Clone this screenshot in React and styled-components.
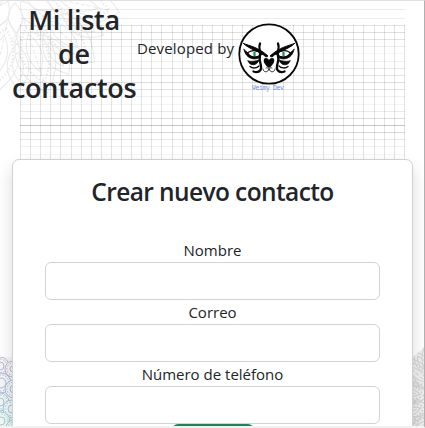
import React from "react";
import styled, { createGlobalStyle } from "styled-components";

const GlobalStyle = createGlobalStyle`
  * { box-sizing: border-box; }
  html, body { margin: 0; height: 428px; overflow: hidden; }
  body {
    background: #fff;
    color: #212529;
    font-family: "Open Sans", "Noto Sans", sans-serif;
    font-size: 15px;
    line-height: 24px;
  }
`;

const Page = styled.div`
  position: relative;
  width: 425px;
  height: 428px;
  overflow: hidden;
  border-top: 1px solid #e0e0e0;
  border-right: 1px solid #b0b0b0;
  border-bottom: 2px solid #f2f2f3;
`;

const Backdrop = styled.svg`
  position: absolute;
  left: 0;
  top: -1px;
`;

const Header = styled.header`
  position: relative;
  display: flex;
  align-items: flex-start;
  height: 158px;
  padding-left: 12px;
`;

const Title = styled.h1`
  width: 124px;
  margin: 2px 0 0;
  text-align: center;
  font-size: 27px;
  line-height: 34px;
  font-weight: 600;
  letter-spacing: -0.3px;
  white-space: nowrap;
`;

const Credit = styled.span`
  margin: 35px 0 0 1px;
  width: 101px;
  white-space: nowrap;
  letter-spacing: 0.15px;
`;

const Logo = styled.svg`
  margin-top: 19px;
`;

const Card = styled.main`
  position: relative;
  width: 401px;
  height: 400px;
  margin-left: 12px;
  padding: 15px 32px;
  border: 1px solid #ced0d2;
  border-radius: 7px;
  background: #fff;
  box-shadow: 0 8px 16px rgba(0, 0, 0, 0.15);
`;

const CardTitle = styled.h2`
  margin: 0 0 29px;
  text-align: center;
  font-size: 24.5px;
  line-height: 34px;
  font-weight: 600;
  letter-spacing: -0.6px;
  white-space: nowrap;
`;

const Form = styled.form`
  display: flex;
  flex-direction: column;
`;

const Field = styled.label`
  display: flex;
  flex-direction: column;
  height: 62px;
  text-align: center;
`;

const FieldName = styled.span`
  height: 24px;
`;

const Input = styled.input`
  width: 335px;
  height: 38px;
  border: 1px solid #ced4da;
  border-radius: 6px;
  background: #fff;
`;

const Submit = styled.button`
  align-self: center;
  width: 82px;
  height: 38px;
  border: 0;
  border-radius: 6px;
  background: #198754;
`;

const columns = Array.from({ length: 39 }, (_, i) => Math.round(20 + i * 10.1) + 0.5);
const rows = [
  [9, 0.07], [18, 0.07], [25, 0.11], [32, 0.13], [39, 0.11], [46, 0.07], [53, 0.03],
  [61, 0.05], [68, 0.09], [75, 0.11], [82, 0.13], [89, 0.11], [96, 0.06], [104, 0.04],
  [111, 0.08], [118, 0.13], [125, 0.22], [132, 0.15], [139, 0.09], [146, 0.05], [154, 0.03],
];

const leaf = (a, b, w) => {
  const m = a + (b - a) * 0.5;
  return `M${a} 0Q${m} ${-w} ${b} 0Q${m} ${w} ${a} 0Z`;
};

const Mandala = ({ x, y, radius: r, color, opacity }) => (
  <g transform={`translate(${x} ${y})`} fill="none" stroke={color} opacity={opacity}>
    {Array.from({ length: 12 }, (_, i) => (
      <g key={i} transform={`rotate(${i * 30 + 12})`}>
        <path d={leaf(r * 0.28, r, r * 0.36)} />
        <path d={leaf(r * 0.36, r * 0.9, r * 0.24)} strokeWidth="2.2" strokeDasharray="1.5 2" />
        <path d={leaf(r * 0.43, r * 0.8, r * 0.13)} />
        <path d={`M${r * 0.3} 0H${r * 0.9}`} strokeDasharray="4 2" />
        <g transform="rotate(15)">
          <path d={leaf(r * 0.5, r * 0.93, r * 0.2)} />
          <path d={leaf(r * 0.58, r * 0.84, r * 0.1)} />
          <path d={leaf(r * 0.12, r * 0.4, r * 0.13)} />
          <circle cx={r * 0.46} r={r * 0.035} />
        </g>
      </g>
    ))}
  </g>
);

const scallops = [
  [0, 366, 9, "#bdb8d0"], [13, 369, 8, "#bdb8d0"], [1, 383, 10, "#abb8d8"], [14, 389, 9, "#a6bcda"],
  [0, 402, 9, "#a0c4da"], [12, 409, 9, "#9bcbd9"], [1, 421, 9, "#96d6d2"], [14, 428, 8, "#96d6d2"],
];

const Scallop = ({ x, y, r, color }) => (
  <g transform={`translate(${x} ${y})`} stroke={color}>
    <circle r={r} />
    <circle r={r - 2} strokeDasharray="1.5 1.5" />
    <circle r={r - 5} />
  </g>
);

const Face = () => (
  <g fill="none" stroke="#080808" strokeLinecap="round">
    <path d="M5.5 23.5C12 26 20 27 30 36L28 37C22 31 12 30 5.5 23.5Z" fill="#080808" strokeWidth="1" />
    <path d="M9 34C12 29.5 19 29.5 24 34C19 38 13 38 9 34Z" strokeWidth="1.1" />
    <path d="M6 29.5L10 33C12 37 18 38 23 36C19 41 8 40 6 29.5Z" fill="#080808" strokeWidth="0.8" />
    <path d="M22 23.5C20 28 23 31 22 36C20 41 25 46 22.5 50C21 52 18 52.5 15.5 51.5" strokeWidth="2.3" />
    <path d="M10 41C14 42 18 41 21 40C19 46 12 46.5 10 41Z" fill="#080808" strokeWidth="0.8" />
    <path d="M12 46.5C15 49 19 48 21 46" strokeWidth="1.3" />
    <path d="M25 49C25 52 29 53 30.5 50C31 48 29 47 28 48" strokeWidth="0.8" />
  </g>
);

export default function App() {
  return (
    <>
      <GlobalStyle />
      <Page>
        <Backdrop width="425" height="428">
          <defs>
            <clipPath id="left"><rect y="357" width="13" height="71" /></clipPath>
            <clipPath id="right"><path d="M412 358L425 346V428H412Z" /></clipPath>
          </defs>
          <Mandala x={14} y={-10} radius={108} color="#888" opacity={0.17} />
          {columns.map((x) => <line key={x} x1={x} x2={x} y1="25" y2="160" stroke="#000" strokeOpacity="0.11" />)}
          {rows.map(([y, o]) => (
            <line key={y} x1="20" x2="405" y1={y + 0.5} y2={y + 0.5} stroke="#000" strokeOpacity={o} />
          ))}
          <g clipPath="url(#left)" fill="#f5f5f8">
            <rect y="357" width="13" height="71" />
            {scallops.map(([x, y, r, color]) => <Scallop key={y} x={x} y={y} r={r} color={color} />)}
          </g>
          <g clipPath="url(#right)">
            <rect x="412" y="340" width="13" height="88" fill="#f0f0f0" />
            <Mandala x={446} y={400} radius={62} color="#aaa" opacity={0.4} />
          </g>
        </Backdrop>
        <Header>
          <Title>Mi lista<br />de<br />contactos</Title>
          <Credit>Developed by</Credit>
          <Logo width="64" height="76" viewBox="0 0 64 76">
            <circle cx="31" cy="34" r="29.7" fill="#fff" stroke="#080808" strokeWidth="1.8" />
            <Face />
            <g transform="translate(62 0) scale(-1 1)"><Face /></g>
            <path d="M31 48C24 43 25 38 28 38Q30 38 31 40Q32 38 34 38C37 38 38 43 31 48Z" fill="#080808" />
            <path d="M16.5 32V36M45.5 32V36" stroke="#159455" strokeWidth="2.2" />
            <text x="14" y="69.5" fill="#6f8cdd" fontFamily="Liberation Mono, monospace" fontSize="6.5" textLength="32">Ψeimy Dev</text>
          </Logo>
        </Header>
        <Card>
          <CardTitle>Crear nuevo contacto</CardTitle>
          <Form>
            {["Nombre", "Correo", "Número de teléfono"].map((name) => (
              <Field key={name}>
                <FieldName>{name}</FieldName>
                <Input />
              </Field>
            ))}
            <Submit type="button" aria-label="Crear" />
          </Form>
        </Card>
      </Page>
    </>
  );
}
